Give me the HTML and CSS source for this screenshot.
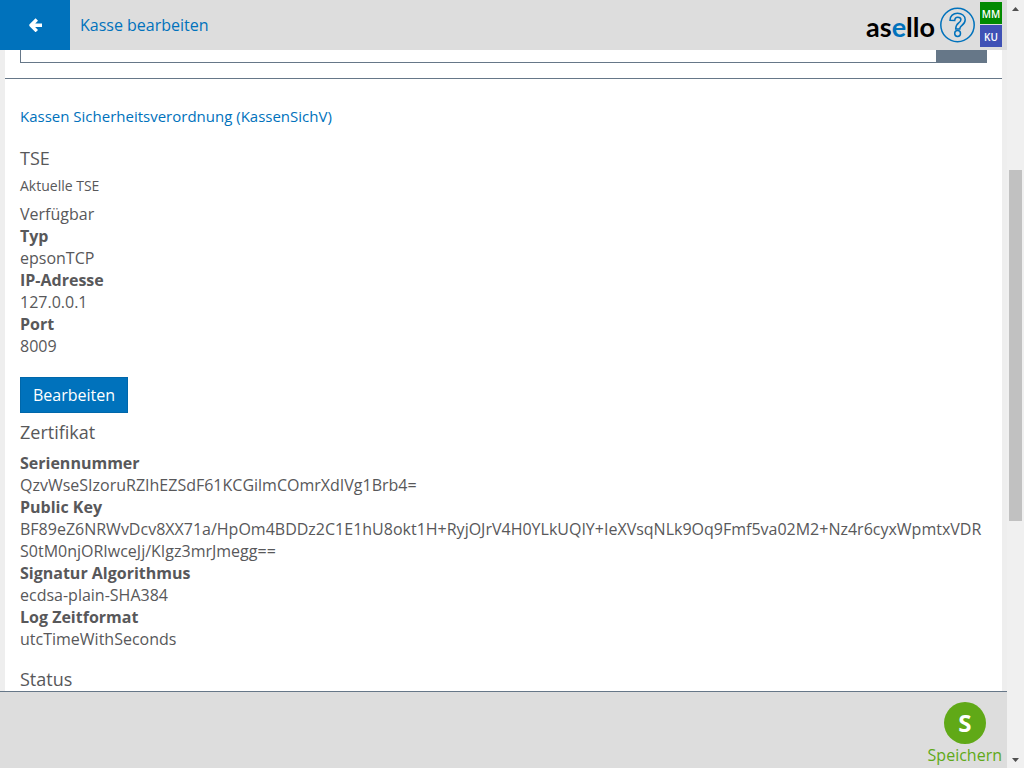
FILE: index.html
```html
<!DOCTYPE html>
<html lang="de">
<head>
<meta charset="utf-8">
<title>Kasse bearbeiten</title>
<link rel="stylesheet" href="styles.css">
</head>
<body>
<div class="app">
  <header class="topbar">
    <button class="back" type="button" aria-label="Zurück">
      <svg width="14" height="14" viewBox="0 0 14 14" fill="none" stroke="#fff" stroke-width="3.400" stroke-linejoin="round"><path d="M8.800 1.500 3 7.300l5.800 5.800M3.500 7.300H14"/></svg>
    </button>
    <h1 class="title">Kasse bearbeiten</h1>
    <div class="logo">as<span class="logo-accent">e</span>llo</div>
    <button class="help" type="button" aria-label="Hilfe">
      <svg width="36" height="36" viewBox="0 0 36 36" fill="none" stroke="#0072bc" stroke-width="1.500">
        <circle cx="17.500" cy="18" r="16.700"/>
        <path d="M10 13.200C10 9 13.200 6.200 17.500 6.200s7.700 2.700 7.700 6.500c0 3.400-2.200 4.900-3.800 6.200-1.200 1-1.600 1.600-1.600 3h-4.100c0-3.200 1-4.500 3-6 1.500-1.100 2.200-1.800 2.200-3.100 0-1.500-1.200-2.500-3.100-2.500-2 0-3 1.200-3.100 3.200z"/>
        <circle cx="17.600" cy="26.500" r="2.900"/>
      </svg>
    </button>
    <div class="users">
      <span class="user user-green">MM</span>
      <span class="user user-blue">KU</span>
    </div>
  </header>
  <main class="content">
    <div class="panel">
      <div class="field">
        <input class="field-input" type="text" aria-label="Auswahl">
        <button class="field-button" type="button" aria-label="Auswählen"></button>
      </div>
      <section class="section">
        <h2 class="section-title">Kassen Sicherheitsverordnung (KassenSichV)</h2>
        <h3 class="heading">TSE</h3>
        <h4 class="subheading">Aktuelle TSE</h4>
        <p class="state">Verfügbar</p>
        <dl class="details">
          <dt>Typ</dt><dd>epsonTCP</dd>
          <dt>IP-Adresse</dt><dd>127.0.0.1</dd>
          <dt>Port</dt><dd>8009</dd>
        </dl>
        <button class="edit" type="button">Bearbeiten</button>
        <h3 class="heading">Zertifikat</h3>
        <dl class="details">
          <dt>Seriennummer</dt><dd>QzvWseSIzoruRZIhEZSdF61KCGilmCOmrXdIVg1Brb4=</dd>
          <dt>Public Key</dt><dd>BF89eZ6NRWvDcv8XX71a/HpOm4BDDz2C1E1hU8okt1H+RyjOJrV4H0YLkUQIY+IeXVsqNLk9Oq9Fmf5va02M2+Nz4r6cyxWpmtxVDRS0tM0njORIwceJj/KIgz3mrJmegg==</dd>
          <dt>Signatur Algorithmus</dt><dd>ecdsa-plain-SHA384</dd>
          <dt>Log Zeitformat</dt><dd>utcTimeWithSeconds</dd>
        </dl>
        <h3 class="heading">Status</h3>
      </section>
    </div>
  </main>
  <footer class="bottombar">
    <button class="save" type="button"><span class="save-icon">S</span>Speichern</button>
  </footer>
</div>
<div class="scrollbar" aria-hidden="true">
  <svg class="arrow" width="7" height="4" viewBox="0 0 7 4"><path d="M0 4 3.500 0 7 4z" fill="#505050"/></svg>
  <div class="track"><div class="thumb"></div></div>
  <svg class="arrow" width="7" height="4" viewBox="0 0 7 4"><path d="M0 0h7L3.500 4z" fill="#505050"/></svg>
</div>
</body>
</html>
```
FILE: styles.css
```css
* { box-sizing: border-box; }

body {
  margin: 0;
  height: 100vh;
  display: flex;
  overflow: hidden;
  background: #eee;
  color: #58585a;
  font-family: "Open Sans", sans-serif;
  font-weight: 400;
  font-size: 16px;
  line-height: 22px;
}

h1, h2, h3, h4, p, dl, dd { margin: 0; font-weight: inherit; }

button { border: 0; padding: 0; font: inherit; cursor: pointer; }

.app { flex: 1; min-width: 0; display: flex; flex-direction: column; }

.topbar {
  flex: none;
  height: 50px;
  display: flex;
  align-items: center;
  padding-right: 5px;
  background: #ddd;
}

.back {
  align-self: stretch;
  width: 70px;
  display: flex;
  align-items: center;
  justify-content: center;
  background: #0072bc;
}

.title { flex: 1; padding-left: 10px; font-size: 16px; color: #0072bc; }

.logo {
  padding-top: 3px;
  font-family: Lato, sans-serif;
  font-weight: 700;
  font-size: 27px;
  line-height: 36px;
  color: #000;
}

.logo-accent { color: #0072bc; }

.help { width: 36px; height: 36px; margin: 0 4px 0 5px; background: none; }

.help svg { display: block; }

.users { display: flex; flex-direction: column; gap: 1px; padding-bottom: 1px; }

.user {
  width: 22px;
  height: 22px;
  font-size: 10px;
  font-weight: 600;
  line-height: 24px;
  text-align: center;
  color: #fff;
}

.user-green { background: #008a00; }

.user-blue { background: #3f51b5; }

.content { flex: 1; min-height: 0; overflow: hidden; }

.panel { margin: 0 5px; background: #fff; }

.field {
  display: flex;
  margin-top: -24px;
  padding: 0 15px 15px;
  border-bottom: 1px solid #667788;
}

.field-input {
  flex: 1;
  min-width: 0;
  height: 37px;
  border: 1px solid #667788;
  border-right: 0;
  background: #fff;
  font: inherit;
}

.field-button { width: 51px; background: #667788; }

.section { padding: 26px 15px 30px; }

.section-title { margin-bottom: 20px; font-size: 15px; color: #0072bc; }

.heading { font-size: 18px; line-height: 22px; margin-bottom: 9px; }

.subheading { font-size: 14px; line-height: 18px; margin: -1px 0 8px; }

.details { margin-bottom: 18px; overflow-wrap: anywhere; }

.details dt { font-weight: 700; }

.edit {
  display: block;
  height: 36px;
  margin: 20px 0 8px;
  padding: 0 12px;
  border: 1px solid #0067aa;
  background: #0072bc;
  color: #fff;
}

.bottombar {
  flex: none;
  height: 77px;
  display: flex;
  justify-content: flex-end;
  padding: 10px 5px 0;
  border-top: 1px solid #667788;
  background: #ddd;
}

.save {
  display: flex;
  flex-direction: column;
  align-items: center;
  background: none;
  color: #60a917;
}

.save-icon {
  width: 42px;
  height: 42px;
  border-radius: 50%;
  background: #60a917;
  color: #fff;
  font-size: 24px;
  font-weight: 700;
  line-height: 42px;
}

.scrollbar {
  flex: none;
  width: 17px;
  display: flex;
  flex-direction: column;
  align-items: center;
  padding: 7px 0 6px;
  background: #f0f0f0;
}

.arrow { flex: none; }

.track { flex: 1; width: 13px; padding-top: 159px; }

.thumb { height: 351px; background: #c1c1c1; }
```
